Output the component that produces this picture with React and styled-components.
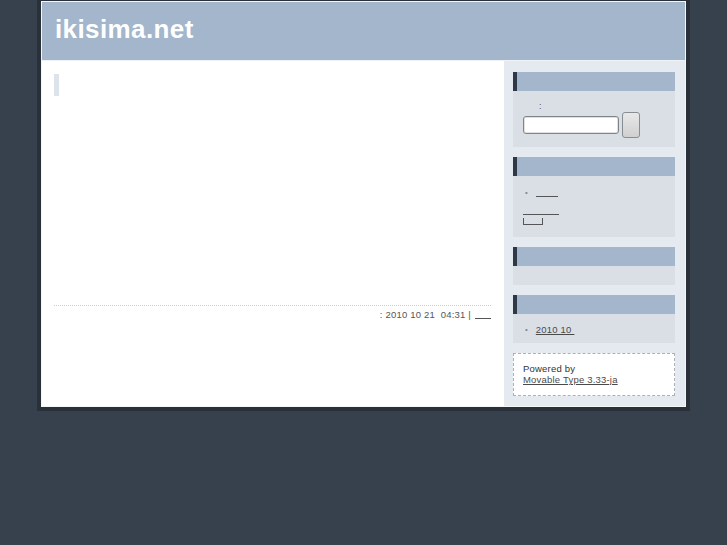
import React from "react";
import styled, { createGlobalStyle } from "styled-components";

const Global = createGlobalStyle`
  html, body { margin: 0; padding: 0; background: #37414d; }
  body { font-family: "Liberation Sans", Arial, sans-serif; }
`;

const Frame = styled.div`
  margin-left: 37px;
  width: 645px;
  padding: 1px 4px 4px 4px;
  background: #2a3038;
`;

const Inner = styled.div`
  border: 1px solid #f4f6f9;
  background: #fff;
`;

const Header = styled.header`
  height: 58px;
  background: #a3b6cc;
  display: flex;
  align-items: center;
  padding-left: 13px;
  border-bottom: 1px solid #eef1f5;
`;

const Title = styled.h1`
  margin: 0;
  margin-top: -4px;
  color: #fff;
  font-size: 26px;
  letter-spacing: 0.4px;
  font-weight: bold;
  font-family: "Liberation Sans", Arial, sans-serif;
`;

const Main = styled.div`
  display: flex;
  height: 345px;
`;

const Content = styled.div`
  flex: 1;
  padding: 13px 13px 0 12px;
  display: flex;
  flex-direction: column;
`;

const EntryHead = styled.div`
  width: 5px;
  height: 22px;
  background: #dde3eb;
`;

const EntryFooter = styled.div`
  margin-top: 209px;
  border-top: 1px dotted #c8ccd2;
  padding-top: 3px;
  text-align: right;
  font-size: 9.5px;
  letter-spacing: 0.2px;
  color: #555;
  height: 12px;
`;

const FootLink = styled.span`
  display: inline-block;
  width: 16px;
  border-bottom: 1px solid #555;
  height: 9px;
  vertical-align: top;
  margin-left: 4px;
`;

const Sidebar = styled.aside`
  width: 162px;
  background: #e5e9f0;
  padding: 11px 10px 0 9px;
  display: flex;
  flex-direction: column;
  gap: 10px;
`;

const Box = styled.div`
  display: flex;
  flex-direction: column;
`;

const BoxHead = styled.div`
  height: 19px;
  background: #a3b6cc;
  border-left: 4px solid #2e3947;
`;

const BoxBody = styled.div`
  background: #dadfe6;
  height: ${(p) => p.$h}px;
  padding: ${(p) => p.$pad || "0 10px"};
  font-size: 9.5px;
  color: #444;
  box-sizing: border-box;
`;

const Label = styled.div`
  padding: 10px 0 0 16px;
  font-size: 9px;
  line-height: 10px;
  color: #555;
`;

const SearchRow = styled.div`
  display: flex;
  align-items: center;
  gap: 3px;
  margin-top: 1px;
`;

const Input = styled.div`
  width: 94px;
  height: 16px;
  background: #fff;
  border: 1px solid #7f848b;
  border-radius: 3px;
  box-shadow: inset 0 0 0 1px #e0e0e0;
`;

const Button = styled.div`
  width: 16px;
  height: 24px;
  border: 1px solid #888d94;
  border-radius: 3px;
  background: linear-gradient(#e8e8e8, #d0d0d0);
`;

const ListItem = styled.div`
  display: flex;
  align-items: center;
  gap: 8px;
  padding-left: 2px;
  height: 12px;
  color: #555;
`;

const Bullet = styled.span`
  font-size: 8px;
  color: #888;
`;

const Link = styled.a`
  color: #4a4a4a;
  text-decoration: underline;
  font-size: 9.5px;
  letter-spacing: 0.2px;
  white-space: pre;
`;

const Blank = styled.span`
  display: inline-block;
  width: ${(p) => p.$w}px;
  height: 8px;
  border-bottom: 1px solid #555;
`;

const Spacer = styled.div`
  height: 8px;
`;

const Bracket = styled.span`
  display: block;
  width: 18px;
  height: 6px;
  border: 1px solid #555;
  border-top: none;
  margin-top: 1px;
`;

const Powered = styled.div`
  background: #fff;
  border: 1px dashed #a9b0ba;
  padding: 9px 9px 0 9px;
  height: 32px;
  font-size: 9.5px;
  letter-spacing: 0.2px;
  line-height: 11px;
  color: #333;
`;

export default function App() {
  return (
    <>
      <Global />
      <Frame>
        <Inner>
          <Header>
            <Title>ikisima.net</Title>
          </Header>
          <Main>
            <Content>
              <EntryHead />
              <EntryFooter>
                : 2010 10 21&nbsp;&nbsp;04:31 |<FootLink />
              </EntryFooter>
            </Content>
            <Sidebar>
              <Box>
                <BoxHead />
                <BoxBody $h={56} $pad="0 0 0 10px">
                  <Label>:</Label>
                  <SearchRow>
                    <Input />
                    <Button />
                  </SearchRow>
                </BoxBody>
              </Box>
              <Box>
                <BoxHead />
                <BoxBody $h={61} $pad="10px 0 0 10px">
                  <ListItem>
                    <Bullet>•</Bullet>
                    <Blank $w={22} />
                  </ListItem>
                  <Spacer />
                  <Blank $w={36} />
                  <Bracket />
                </BoxBody>
              </Box>
              <Box>
                <BoxHead />
                <BoxBody $h={19} />
              </Box>
              <Box>
                <BoxHead />
                <BoxBody $h={29} $pad="9px 0 0 10px">
                  <ListItem>
                    <Bullet>•</Bullet>
                    <Link>2010 10 </Link>
                  </ListItem>
                </BoxBody>
              </Box>
              <Powered>
                Powered by
                <br />
                <Link>Movable Type 3.33-ja</Link>
              </Powered>
            </Sidebar>
          </Main>
        </Inner>
      </Frame>
    </>
  );
}
